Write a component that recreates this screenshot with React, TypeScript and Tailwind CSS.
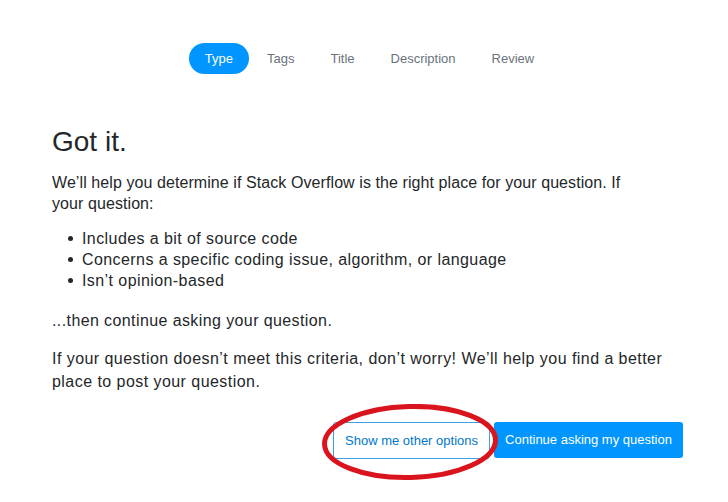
import React from "react";

export default function App() {
  const steps = ["Type", "Tags", "Title", "Description", "Review"];
  const criteria = [
    "Includes a bit of source code",
    "Concerns a specific coding issue, algorithm, or language",
    "Isn’t opinion-based",
  ];

  return (
    <div className="min-h-screen bg-white font-['Liberation_Sans',Arial,sans-serif] text-[#242729]">
      {/* Step tabs */}
      <nav className="flex justify-center pt-[43px] pl-[13px]">
        <ul className="flex items-center">
          {steps.map((s, i) => (
            <li
              key={s}
              className={
                i === 0
                  ? "h-[31px] px-[16px] rounded-full bg-[#0095ff] text-white text-[13px] flex items-center"
                  : "h-[31px] px-[18px] text-[#6a737c] text-[13px] flex items-center"
              }
            >
              {s}
            </li>
          ))}
        </ul>
      </nav>

      <main className="pl-[52px] pr-[45px] pt-[51px]">
        <h1 className="text-[28px] leading-[34px] font-normal">Got it.</h1>
        <p className="mt-[13px] text-[16px] leading-[21px] max-w-[603px] tracking-[0.08px]">
          We’ll help you determine if Stack Overflow is the right place for your question. If your question:
        </p>
        <ul className="mt-[14px] pl-[16px] text-[16px] leading-[21px] tracking-[0.42px]">
          {criteria.map((c) => (
            <li key={c} className="flex items-center">
              <span className="w-[5px] h-[5px] rounded-full bg-[#242729] mr-[9px]" />
              {c}
            </li>
          ))}
        </ul>
        <p className="mt-[19px] text-[16px] leading-[21px] tracking-[0.4px]">...then continue asking your question.</p>
        <p className="mt-[16px] text-[16px] leading-[23px] max-w-[620px] tracking-[0.45px]">
          If your question doesn’t meet this criteria, don’t worry! We’ll help you find a better place to post your question.
        </p>

        <div className="mt-[29px] flex justify-end gap-[4px]">
          <div className="relative">
            <button className="h-[37px] w-[157px] border border-[#3c9fe4] rounded-[3px] bg-white text-[#0077cc] text-[13px]">
              Show me other options
            </button>
            <svg
              className="absolute left-[-11px] top-[-18px] pointer-events-none"
              width="176"
              height="78"
              viewBox="0 0 176 78"
            >
              <ellipse
                cx="88"
                cy="38"
                rx="85.5"
                ry="35.5"
                fill="none"
                stroke="#d9141d"
                strokeWidth="5"
                transform="rotate(-1.5 88 38)"
              />
            </svg>
          </div>
          <button className="h-[36px] w-[189px] rounded-[3px] bg-[#0095ff] text-white text-[13px]">
            Continue asking my question
          </button>
        </div>
      </main>
    </div>
  );
}
